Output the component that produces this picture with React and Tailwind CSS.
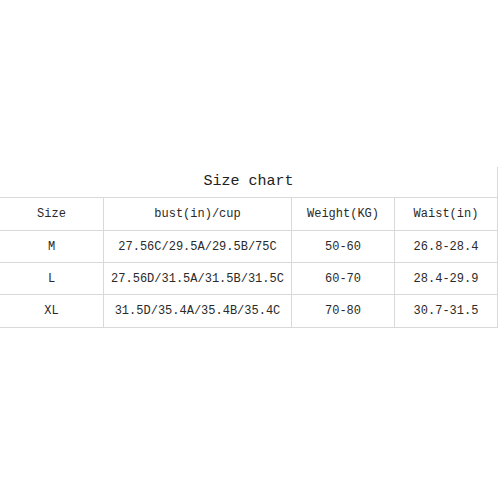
import React from "react";

const rows = [
  { size: "M", bust: "27.56C/29.5A/29.5B/75C", weight: "50-60", waist: "26.8-28.4", h: "h-[32px]" },
  { size: "L", bust: "27.56D/31.5A/31.5B/31.5C", weight: "60-70", waist: "28.4-29.9", h: "h-[32px]" },
  { size: "XL", bust: "31.5D/35.4A/35.4B/35.4C", weight: "70-80", waist: "30.7-31.5", h: "h-[33px]" },
];

const Cell = ({ children, first, h }) => (
  <div
    className={`${h} flex items-center justify-center border-b border-[#d9d9d9] ${
      first ? "" : "border-l"
    }`}
  >
    {children}
  </div>
);

export default function App() {
  return (
    <div
      className="w-[500px] h-[500px] bg-white pt-[167px] text-[#2a2a2a]"
      style={{ fontFamily: '"Liberation Mono", "DejaVu Sans Mono", monospace' }}
    >
      <div className="w-[498px] border-r border-[#d9d9d9]">
        <div className="h-[30px] flex items-center justify-center text-[15px] text-[#222]">
          Size chart
        </div>
        <div className="grid grid-cols-[103px_188px_103px_1fr] border-t border-[#d9d9d9] text-[12px]">
          <Cell first h="h-[33px]">Size</Cell>
          <Cell h="h-[33px]">bust(in)/cup</Cell>
          <Cell h="h-[33px]">Weight(KG)</Cell>
          <Cell h="h-[33px]">Waist(in)</Cell>
          {rows.map((r) => (
            <React.Fragment key={r.size}>
              <Cell first h={r.h}>{r.size}</Cell>
              <Cell h={r.h}>{r.bust}</Cell>
              <Cell h={r.h}>{r.weight}</Cell>
              <Cell h={r.h}>{r.waist}</Cell>
            </React.Fragment>
          ))}
        </div>
      </div>
    </div>
  );
}
